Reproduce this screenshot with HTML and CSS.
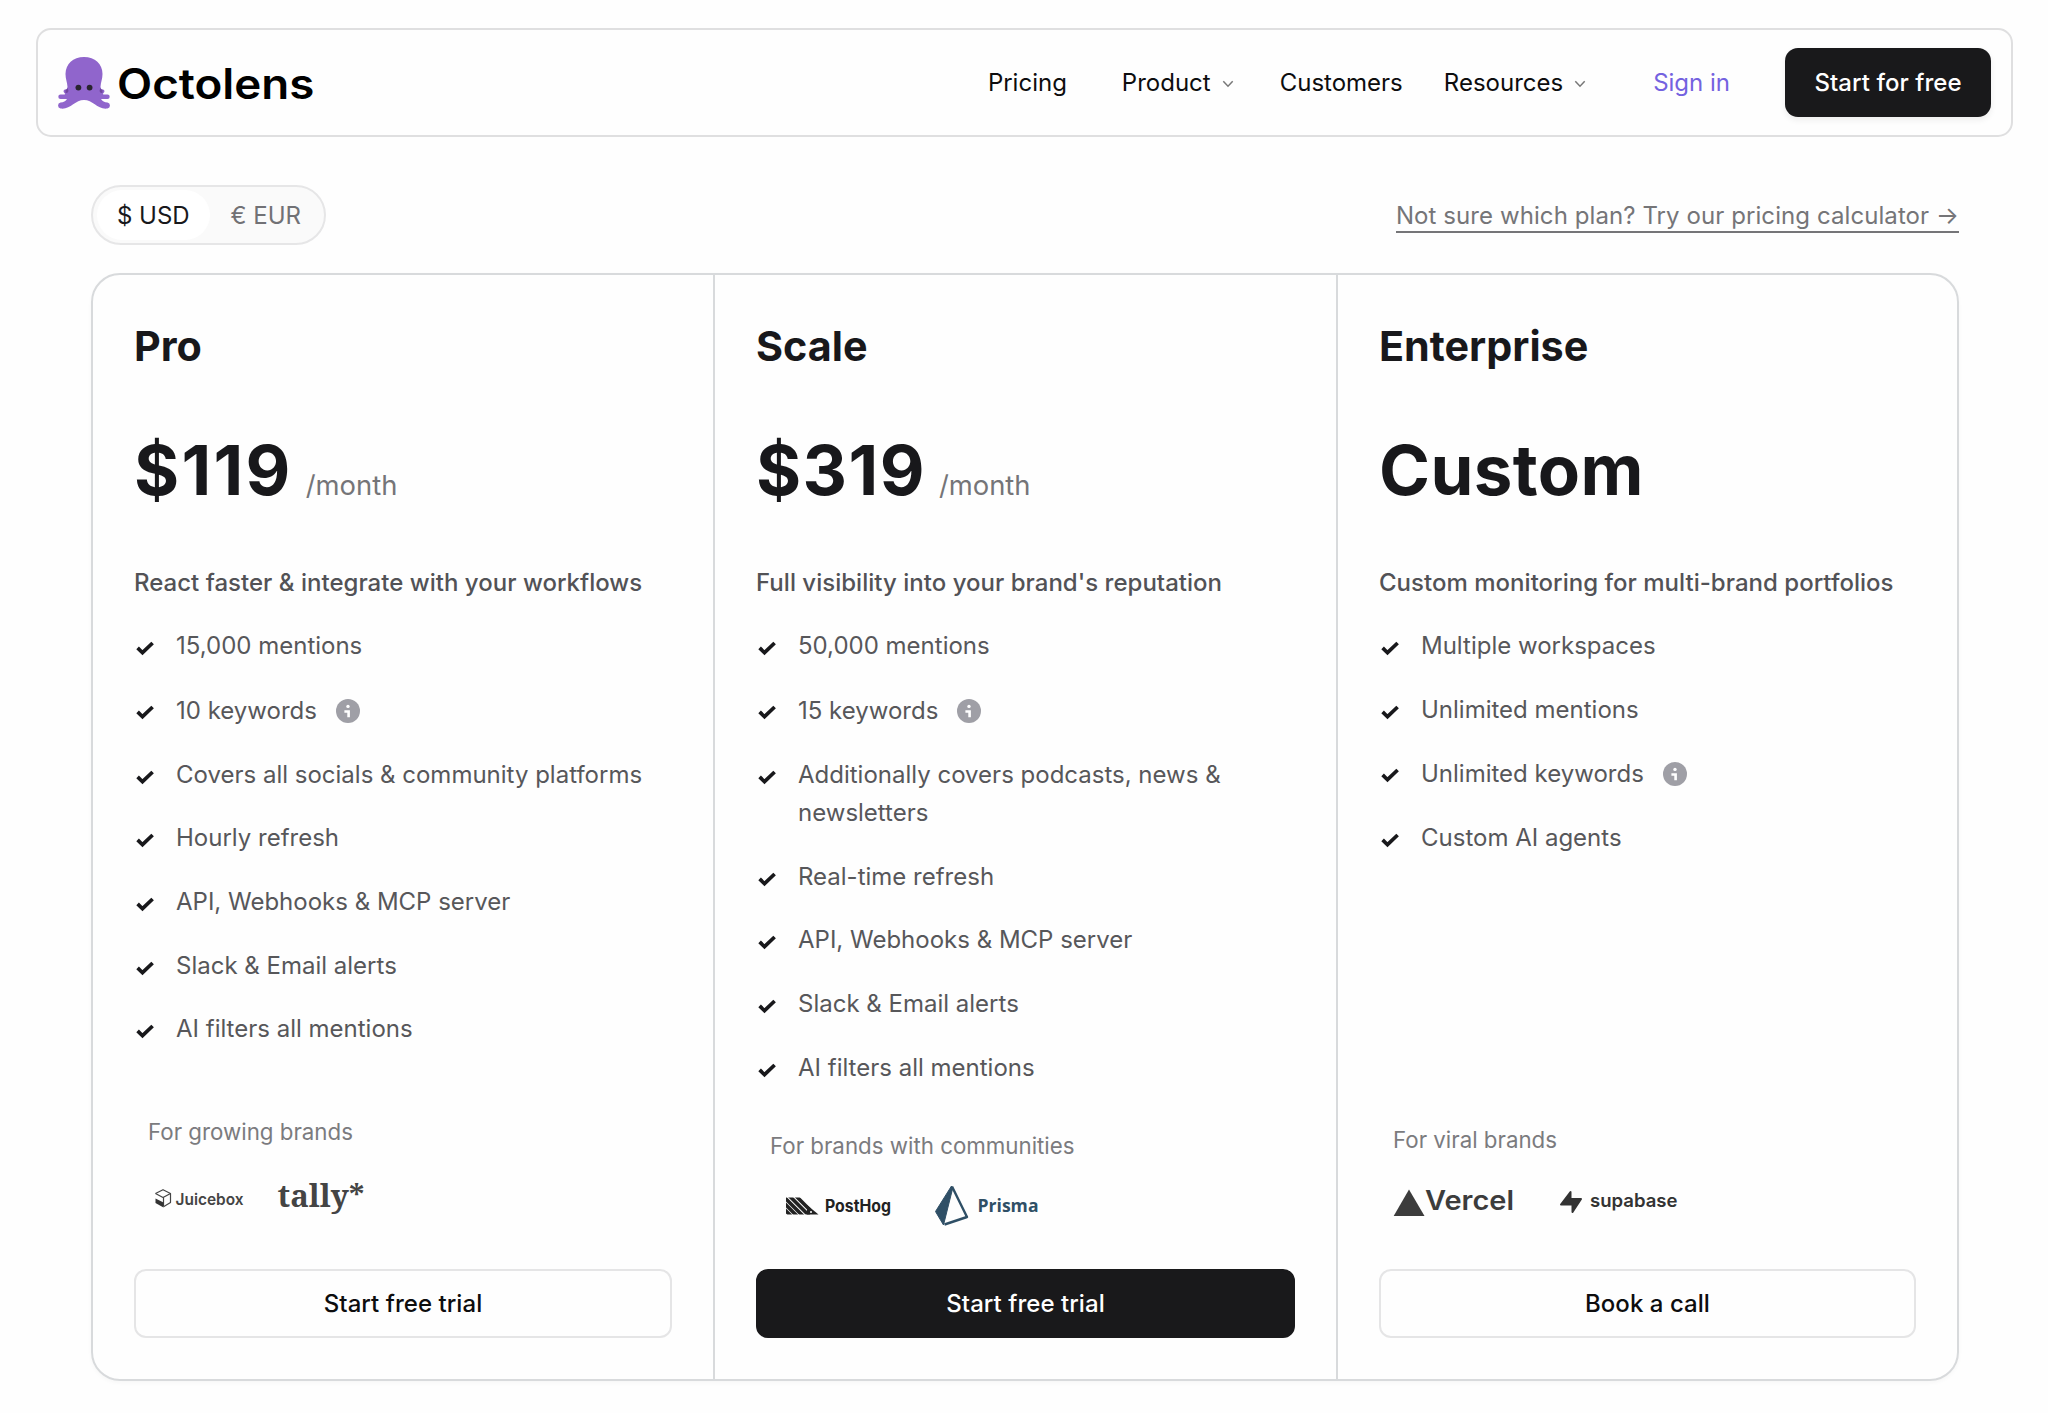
FILE: index.html
```
<!DOCTYPE html>
<html lang="en">
<head>
<meta charset="utf-8">
<title>Octolens Pricing</title>
<link rel="stylesheet" href="styles.css">
</head>
<body>
<svg width="0" height="0" class="defs" aria-hidden="true">
  <symbol id="check" viewBox="0 0 22 16"><path d="M3.600 7.900 8.500 12.700 18.600 3" fill="none" stroke="#18181b" stroke-width="3.700"/></symbol>
  <symbol id="info" viewBox="0 0 24 24"><circle cx="12" cy="12" r="12" fill="#9f9fa6"/><circle cx="12" cy="7.400" r="1.700" fill="#fff"/><path d="M8.400 12.500h4.200v5.800" fill="none" stroke="#fff" stroke-width="2.600"/></symbol>
  <symbol id="chev" viewBox="0 0 12 8"><path d="M1.300 1.300 6 6.200 10.700 1.300" fill="none" stroke="#777" stroke-width="1.500"/></symbol>
</svg>
<header class="header">
  <a class="brand">
    <svg class="octopus" viewBox="0 0 52 52">
      <path fill="#9065cc" d="M26 0C37 0 44.500 7 44.500 17C44.500 22 42.800 25 42.500 30Q43 33 45 32.500A1.900 1.900 0 0 1 45.500 36Q44 37 45.500 37.600H49.500A2.200 2.200 0 0 1 49.500 42H43Q45 45.300 49.500 45.600A3 3 0 0 1 49.500 51.500C40 53 35 43 26 43C17 43 12 53 2.500 51.500A3 3 0 0 1 2.500 45.600Q7 45.300 9 42H2.500A2.200 2.200 0 0 1 2.500 37.600H6.500Q8 37 6.500 36A1.900 1.900 0 0 1 7 32.500Q9 33 9.500 30C9.200 25 7.500 22 7.500 17C7.500 7 15 0 26 0Z"/>
      <path fill="#71479f" d="M42.300 31Q43 33 44.500 32.700V36Q42 36.500 41.500 34ZM9.700 31Q9 33 7.500 32.700V36Q10 36.500 10.500 34Z"/>
      <circle cx="20.400" cy="30.600" r="2.900" fill="#29242f"/><circle cx="31.600" cy="30.600" r="2.900" fill="#29242f"/>
    </svg>
    <svg class="wordmark" viewBox="0 0 200 52"><text x="-2" y="41.500" textLength="197.500" lengthAdjust="spacingAndGlyphs">Octolens</text></svg>
  </a>
  <nav class="nav">
    <a class="n1">Pricing</a>
    <a class="n2">Product <svg class="chev"><use href="#chev"/></svg></a>
    <a class="n3">Customers</a>
    <a class="n4">Resources <svg class="chev"><use href="#chev"/></svg></a>
    <a class="signin">Sign in</a>
    <a class="cta">Start for free</a>
  </nav>
</header>
<main class="main">
  <div class="toolbar">
    <div class="toggle"><span class="opt on">$ USD</span><span class="opt">€ EUR</span></div>
    <a class="calc">Not sure which plan? Try our pricing calculator →</a>
  </div>
  <div class="plans">
    <section class="plan">
      <h2>Pro</h2>
      <div class="price"><b class="p119">$119</b><span>/month</span></div>
      <p class="tag">React faster &amp; integrate with your workflows</p>
      <ul>
        <li><svg class="check"><use href="#check"/></svg>15,000 mentions</li>
        <li class="tall"><svg class="check"><use href="#check"/></svg>10 keywords<svg class="info"><use href="#info"/></svg></li>
        <li><svg class="check"><use href="#check"/></svg>Covers all socials &amp; community platforms</li>
        <li><svg class="check"><use href="#check"/></svg>Hourly refresh</li>
        <li><svg class="check"><use href="#check"/></svg>API, Webhooks &amp; MCP server</li>
        <li><svg class="check"><use href="#check"/></svg>Slack &amp; Email alerts</li>
        <li><svg class="check"><use href="#check"/></svg>AI filters all mentions</li>
      </ul>
      <div class="foot foot-pro">
        <p>For growing brands</p>
        <svg class="logos" viewBox="148 1176 400 60">
          <g fill="none" stroke="#444" stroke-width="1.200" stroke-linejoin="round"><path d="M155.500 1193.500 163 1189.700 170.500 1193.500V1202.500L163.500 1206.800"/><path d="M155.500 1193.500 163 1197.500 170.500 1193.500M163.500 1197.500V1206"/></g>
          <path fill="#333" d="M155.500 1198.500 163.500 1202.500V1207.500L155.500 1203Z"/>
          <text x="175.500" y="1205" class="t-juice" textLength="68" lengthAdjust="spacingAndGlyphs">Juicebox</text>
          <text x="277.500" y="1207" class="t-tally" textLength="87" lengthAdjust="spacingAndGlyphs">tally*</text>
        </svg>
      </div>
      <a class="btn">Start free trial</a>
    </section>
    <section class="plan">
      <h2>Scale</h2>
      <div class="price"><b class="p319">$319</b><span>/month</span></div>
      <p class="tag">Full visibility into your brand's reputation</p>
      <ul>
        <li><svg class="check"><use href="#check"/></svg>50,000 mentions</li>
        <li class="tall"><svg class="check"><use href="#check"/></svg>15 keywords<svg class="info"><use href="#info"/></svg></li>
        <li><svg class="check"><use href="#check"/></svg>Additionally covers podcasts, news &amp;<br>newsletters</li>
        <li><svg class="check"><use href="#check"/></svg>Real-time refresh</li>
        <li><svg class="check"><use href="#check"/></svg>API, Webhooks &amp; MCP server</li>
        <li><svg class="check"><use href="#check"/></svg>Slack &amp; Email alerts</li>
        <li><svg class="check"><use href="#check"/></svg>AI filters all mentions</li>
      </ul>
      <div class="foot foot-scale">
        <p>For brands with communities</p>
        <svg class="logos" viewBox="770 1176 400 60">
          <clipPath id="hog"><path d="M786 1197.500 803 1197.500 818 1214.500H786Z"/></clipPath>
          <g clip-path="url(#hog)" stroke="#222" stroke-width="3.600"><path d="M780 1205 792 1217M780 1199 797 1216M783 1196 804 1217M789 1195.500 809 1215.500M796 1196 810 1210"/></g>
          <path fill="#222" d="M807 1205 818.500 1214.500H807Z"/><circle cx="811" cy="1212" r="1" fill="#fff"/>
          <text x="825" y="1212" class="t-hog" textLength="66" lengthAdjust="spacingAndGlyphs">PostHog</text>
          <path d="M952 1186.500 967 1217 944.500 1224.500" fill="none" stroke="#2f4f66" stroke-width="2.400" stroke-linejoin="round"/>
          <path fill="#2f4f66" stroke="#2f4f66" stroke-linejoin="round" d="M951.500 1186 935.500 1211.500 943.500 1225 952.500 1189Z"/>
          <text x="977.500" y="1212" class="t-prisma" textLength="61" lengthAdjust="spacingAndGlyphs">Prisma</text>
        </svg>
      </div>
      <a class="btn dark">Start free trial</a>
    </section>
    <section class="plan">
      <h2>Enterprise</h2>
      <div class="price"><b class="custom">Custom</b></div>
      <p class="tag">Custom monitoring for multi-brand portfolios</p>
      <ul>
        <li><svg class="check"><use href="#check"/></svg>Multiple workspaces</li>
        <li><svg class="check"><use href="#check"/></svg>Unlimited mentions</li>
        <li class="tall"><svg class="check"><use href="#check"/></svg>Unlimited keywords<svg class="info"><use href="#info"/></svg></li>
        <li><svg class="check"><use href="#check"/></svg>Custom AI agents</li>
      </ul>
      <div class="foot foot-ent">
        <p>For viral brands</p>
        <svg class="logos" viewBox="1393 1176 400 60">
          <path fill="#3c3c3c" d="M1409 1189.500 1424.500 1216H1393.700Z"/>
          <text x="1425" y="1210.300" class="t-vercel" textLength="89" lengthAdjust="spacingAndGlyphs">Vercel</text>
          <path fill="#333" stroke="#333" stroke-width="2" stroke-linejoin="round" d="M1570.500 1192V1199H1581L1572.500 1212V1204.500H1561Z"/>
          <text x="1590" y="1206.500" class="t-supa" textLength="87.500" lengthAdjust="spacingAndGlyphs">supabase</text>
        </svg>
      </div>
      <a class="btn">Book a call</a>
    </section>
  </div>
</main>
</body>
</html>
```
FILE: styles.css
```
* { box-sizing: border-box; }
body { margin: 0; height: 1413px; overflow: hidden; background: #fefefe; font-family: Inter, "Liberation Sans", sans-serif; font-size: 24px; color: #18181b; padding-top: 28px; }
svg { overflow: visible; }
.defs { display: block; height: 0; }
h2, p, ul { margin: 0; padding: 0; }
a { white-space: nowrap; }

.header { margin: 0 35px 0 36px; height: 109px; border: 2px solid #dfdfe0; border-radius: 15px; display: flex; align-items: center; justify-content: space-between; padding: 0 20px; }
.brand { display: flex; align-items: center; gap: 9px; }
.octopus { width: 52px; height: 52px; }
.wordmark { width: 200px; height: 52px; font-weight: 600; font-size: 42px; fill: #000; }
.nav { display: flex; align-items: center; color: #0d0d0e; }
.nav a { display: flex; align-items: center; }
.chev { width: 12px; height: 8px; margin: 2px 0 0 11px; }
.n1 { margin-right: 55px; }
.n2 { margin-right: 46px; }
.n3 { margin-right: 41px; }
.n4 { margin-right: 67px; }
.signin { color: #7462e0; margin-right: 55px; }
.nav .cta { width: 206px; height: 69px; border-radius: 13px; background: #19191b; color: #fff; font-weight: 500; letter-spacing: .05px; justify-content: center; box-shadow: 0 3px 6px rgba(0,0,0,.07); }

.main { padding: 48px 89px 0 91px; }
.toolbar { display: flex; justify-content: space-between; align-items: center; height: 60px; }
.toggle { width: 235px; height: 60px; border: 2px solid #e6e6e7; border-radius: 30px; background: #fafafa; padding: 3px 2px 3px 4px; display: flex; }
.opt { border-radius: 26px; color: #717175; flex: 1; display: flex; align-items: center; justify-content: center; }
.opt.on { background: #fff; color: #18181b; }
.calc { color: #757578; border-bottom: 2px solid #757578; height: 32px; line-height: 30px; margin-top: 3px; letter-spacing: .08px; }

.plans { margin-top: 28px; height: 1108px; border: 2px solid #d8dadc; border-radius: 29px; display: grid; grid-template-columns: 620px 623px 1fr; box-shadow: 0 2px 4px rgba(0,0,0,.03); }
.plan { display: flex; flex-direction: column; padding: 46px 41px 41px; }
.plan + .plan { border-left: 2px solid #d8dadc; }
h2 { font-size: 41.300px; line-height: 50px; font-weight: 700; }
.price { height: 80px; margin-top: 59px; display: flex; align-items: baseline; }
.price b { font-size: 69px; line-height: 80px; font-weight: 700; }
.price .p119 { letter-spacing: 2.300px; }
.price .p319 { letter-spacing: 1.400px; }
.price .custom { letter-spacing: .4px; }
.price span { font-size: 27.400px; color: #757578; margin-left: 13px; }
.tag { margin-top: 54px; line-height: 38px; font-weight: 500; color: #525256; white-space: nowrap; letter-spacing: .02px; }
ul { margin-top: 25px; list-style: none; display: flex; flex-direction: column; gap: 25.300px; }
li { position: relative; padding-left: 42px; line-height: 38.300px; color: #57575a; white-space: nowrap; }
li.tall { line-height: 40px; display: flex; align-items: center; }
.check { position: absolute; left: 0; top: 13px; width: 22px; height: 16px; }
.info { width: 24px; height: 24px; margin-left: 19px; }
.foot { margin-top: auto; padding-left: 14px; }
.foot p { font-size: 22.300px; line-height: 36px; color: #7b7b7e; }
.logos { display: block; width: 400px; height: 60px; }
.foot-pro .logos { margin-top: 26px; }
.foot-scale .logos { margin-top: 12px; }
.foot-ent .logos { margin-top: 18px; }
.btn { height: 69px; border: 2px solid #e5e5e6; border-radius: 12px; display: flex; align-items: center; justify-content: center; font-weight: 500; color: #0d0d0e; flex: none; margin-top: 33px; letter-spacing: .05px; }
.btn.dark { background: #19191b; border-color: #19191b; color: #fff; }
.t-juice { font: 600 16px Inter, sans-serif; fill: #444; }
.t-tally { font: bold 31px "Noto Serif", "Liberation Serif", serif; fill: #444; }
.t-hog { font: 700 17px Inter, sans-serif; fill: #222; }
.t-prisma { font: 700 18px "Open Sans", sans-serif; fill: #2f4f66; }
.t-vercel { font: 600 27px Inter, sans-serif; fill: #3c3c3c; }
.t-supa { font: 600 18px Inter, sans-serif; fill: #333; }
```
